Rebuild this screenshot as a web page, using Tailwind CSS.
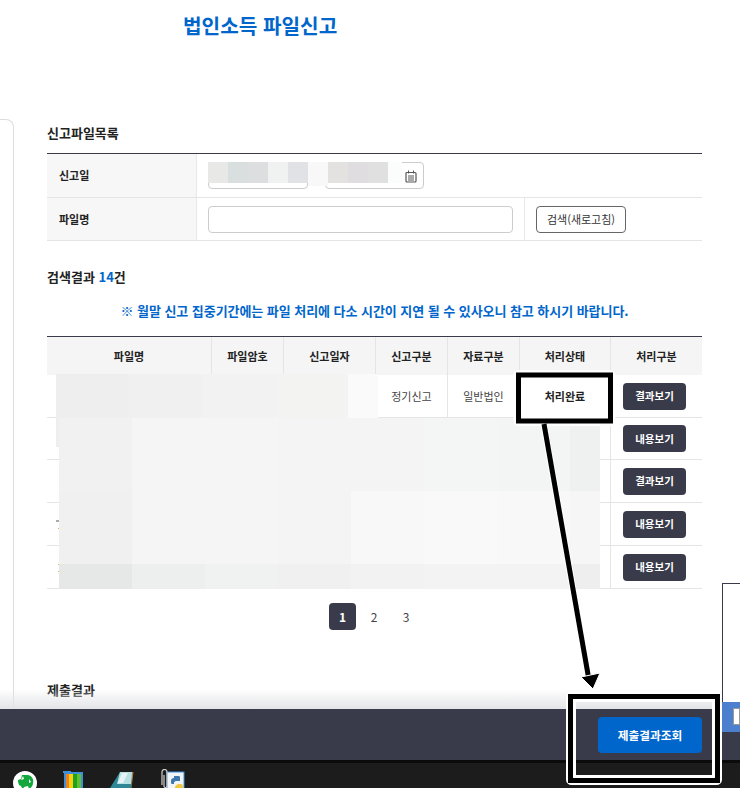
<!DOCTYPE html>
<html lang="ko">
<head>
    <meta charset="UTF-8" />
    <title>법인소득 파일신고</title>
    <script src="https://cdn.jsdelivr.net/npm/@tailwindcss/browser@4"></script>
</head>
<body class="bg-white font-['Noto_Sans_CJK_KR',sans-serif] text-[#222]">
<div class="relative w-[740px] h-[788px] overflow-hidden flex flex-col">

    <!-- 본문 -->
    <div class="relative h-[709px] overflow-hidden">
        <h1 class="h-[119px] pl-[183px] pt-[11px] text-[20.200px] leading-[30px] font-bold text-[#0066cc]">법인소득 파일신고</h1>

        <div class="flex h-[590px]">
            <div class="w-[14px] h-full border-t border-r border-[#dddddd] rounded-tr-lg"></div>

            <div class="ml-[33px] w-[655px] pt-[4px]">
                <h2 class="text-[13px] leading-[20px] font-bold">신고파일목록</h2>

                <div class="mt-[10px] border-t border-[#3a3b4a] text-[11px]">
                    <div class="flex h-[44px] border-b border-[#e5e5e5]">
                        <div class="w-[150px] bg-[#f7f7f7] border-r border-[#e8e8e8] pl-[12px] flex items-center font-bold">신고일</div>
                        <div class="relative flex-1 pl-[11px] pt-[8px]">
                            <div class="flex gap-[17px]">
                                <div class="w-[100px] h-[27px] border border-[#cccccc] rounded"></div>
                                <div class="relative w-[99px] h-[27px] border border-[#cccccc] rounded">
                                    <svg class="absolute right-[6px] top-[7px] w-[12px] h-[13px]" viewBox="0 0 12 13" fill="none" stroke="#555" stroke-width="1.2">
                                        <rect x="1" y="2.500" width="10" height="9.500" rx="1"/>
                                        <path d="M3.500 0.500v3M8.500 0.500v3M3 6h6M3 8h6M3 10h6" stroke-width="1"/>
                                    </svg>
                                </div>
                            </div>
                            <!-- 가림 처리 -->
                            <div class="absolute left-[11px] top-[8px] flex h-[21px]">
                                <div class="w-[20px] bg-[#e8e8e6]"></div>
                                <div class="w-[20px] bg-[#d9dedf]"></div>
                                <div class="w-[20px] bg-[#dcdedf]"></div>
                                <div class="w-[20px] bg-[#f0f1f1]"></div>
                                <div class="w-[20px] bg-[#e0e2e5]"></div>
                                <div class="w-[20px] h-[24px] bg-[#f8f8f8]"></div>
                                <div class="w-[20px] bg-[#e3e2e0]"></div>
                                <div class="w-[20px] bg-[#dfdddf]"></div>
                                <div class="w-[20px] bg-[#dfe0df]"></div>
                                <div class="w-[14px] bg-[#fbfcfc]"></div>
                            </div>
                        </div>
                    </div>
                    <div class="flex h-[43px] border-b border-[#e5e5e5]">
                        <div class="w-[150px] bg-[#f7f7f7] border-r border-[#e8e8e8] pl-[12px] flex items-center font-bold">파일명</div>
                        <div class="w-[328px] pl-[11px] border-r border-[#e8e8e8] flex items-center">
                            <input type="text" class="w-[305px] h-[27px] border border-[#cccccc] rounded" />
                        </div>
                        <div class="pl-[11px] flex items-center">
                            <button class="w-[90px] h-[27px] border border-[#666666] rounded text-[11px] text-[#333]">검색(새로고침)</button>
                        </div>
                    </div>
                </div>

                <h2 class="mt-[26px] text-[13px] leading-[20px] font-bold">검색결과 <span class="text-[#0066cc]">14</span>건</h2>
                <p class="mt-[14px] text-center text-[13px] leading-[20px] font-bold tracking-[-0.050px] text-[#0066cc]">※ 월말 신고 집중기간에는 파일 처리에 다소 시간이 지연 될 수 있사오니 참고 하시기 바랍니다.</p>

                <table class="mt-[15px] w-[655px] table-fixed border-separate border-spacing-0 border-t border-[#3a3b4a] text-[11px] text-center">
                    <colgroup>
                        <col class="w-[165px]" /><col class="w-[72px]" /><col class="w-[92px]" /><col class="w-[72px]" /><col class="w-[72px]" /><col class="w-[91px]" /><col class="w-[91px]" />
                    </colgroup>
                    <thead>
                        <tr class="h-[38px] bg-[#f5f5f5] font-bold">
                            <th class="border-r border-[#e5e5e5]">파일명</th>
                            <th class="border-r border-[#e5e5e5]">파일암호</th>
                            <th class="border-r border-[#e5e5e5]">신고일자</th>
                            <th class="border-r border-[#e5e5e5]">신고구분</th>
                            <th class="border-r border-[#e5e5e5]">자료구분</th>
                            <th class="border-r border-[#e5e5e5]">처리상태</th>
                            <th>처리구분</th>
                        </tr>
                    </thead>
                    <tbody class="text-[#444]">
                        <tr class="h-[43px]">
                            <td class="border-b border-r border-[#e5e5e5]"></td>
                            <td class="border-b border-r border-[#e5e5e5]"></td>
                            <td class="border-b border-r border-[#e5e5e5]"></td>
                            <td class="border-b border-r border-[#e5e5e5]">정기신고</td>
                            <td class="border-b border-r border-[#e5e5e5]">일반법인</td>
                            <td class="border-b border-r border-[#e5e5e5] font-bold text-[#222]">처리완료</td>
                            <td class="border-b border-[#e5e5e5] pr-[4px]"><button class="w-[63px] h-[27px] rounded bg-[#3a3b4a] text-white text-[10.500px] font-bold">결과보기</button></td>
                        </tr>
                        <tr class="h-[42px]">
                            <td class="border-b border-r border-[#e5e5e5]"></td><td class="border-b border-r border-[#e5e5e5]"></td><td class="border-b border-r border-[#e5e5e5]"></td><td class="border-b border-r border-[#e5e5e5]"></td><td class="border-b border-r border-[#e5e5e5]"></td><td class="border-b border-r border-[#e5e5e5]"></td>
                            <td class="border-b border-[#e5e5e5] pr-[4px]"><button class="w-[63px] h-[27px] rounded bg-[#3a3b4a] text-white text-[10.500px] font-bold">내용보기</button></td>
                        </tr>
                        <tr class="h-[43px]">
                            <td class="border-b border-r border-[#e5e5e5]"></td><td class="border-b border-r border-[#e5e5e5]"></td><td class="border-b border-r border-[#e5e5e5]"></td><td class="border-b border-r border-[#e5e5e5]"></td><td class="border-b border-r border-[#e5e5e5]"></td><td class="border-b border-r border-[#e5e5e5]"></td>
                            <td class="border-b border-[#e5e5e5] pr-[4px]"><button class="w-[63px] h-[27px] rounded bg-[#3a3b4a] text-white text-[10.500px] font-bold">결과보기</button></td>
                        </tr>
                        <tr class="h-[43px]">
                            <td class="border-b border-r border-[#e5e5e5]"></td><td class="border-b border-r border-[#e5e5e5]"></td><td class="border-b border-r border-[#e5e5e5]"></td><td class="border-b border-r border-[#e5e5e5]"></td><td class="border-b border-r border-[#e5e5e5]"></td><td class="border-b border-r border-[#e5e5e5]"></td>
                            <td class="border-b border-[#e5e5e5] pr-[4px]"><button class="w-[63px] h-[27px] rounded bg-[#3a3b4a] text-white text-[10.500px] font-bold">내용보기</button></td>
                        </tr>
                        <tr class="h-[43px]">
                            <td class="border-b border-r border-[#e5e5e5]"></td><td class="border-b border-r border-[#e5e5e5]"></td><td class="border-b border-r border-[#e5e5e5]"></td><td class="border-b border-r border-[#e5e5e5]"></td><td class="border-b border-r border-[#e5e5e5]"></td><td class="border-b border-r border-[#e5e5e5]"></td>
                            <td class="border-b border-[#e5e5e5] pr-[4px]"><button class="w-[63px] h-[27px] rounded bg-[#3a3b4a] text-white text-[10.500px] font-bold">내용보기</button></td>
                        </tr>
                    </tbody>
                </table>

                <div class="mt-[14px] pl-[2px] flex justify-center items-center text-[12px] text-[#444]">
                    <span class="w-[27px] h-[27px] rounded bg-[#3a3b4a] text-white font-bold flex items-center justify-center">1</span>
                    <span class="w-[32px] ml-[2px] text-center">2</span>
                    <span class="w-[32px] text-center">3</span>
                </div>

                <h2 class="mt-[50px] text-[13px] leading-[20px] font-bold">제출결과</h2>
            </div>
        </div>

        <!-- 첫 행 가림 -->
        <div class="absolute left-[56px] top-[374px] flex h-[44px]">
            <div class="w-[73px] bg-[#eeeeee]"></div>
            <div class="w-[73px] bg-[#f0f0f0]"></div>
            <div class="w-[73px] bg-[#f2f2f2]"></div>
            <div class="w-[73px] bg-[#f3f3f2]"></div>
            <div class="w-[30px] bg-[#f9faf9]"></div>
        </div>
        <!-- 나머지 행 가림 -->
        <div class="absolute left-[56px] top-[418px] w-[3px] h-[29px] bg-[#eeeeee]"></div>
        <div class="absolute left-[56px] top-[520px] w-[3px] h-[2px] bg-[#aaaaaa]"></div>
        <div class="absolute left-[58px] top-[528px] w-[1px] h-[1px] bg-[#f0b040]"></div>
        <div class="absolute left-[58px] top-[564px] w-[1px] h-[1px] bg-[#f0b040]"></div>
        <div class="absolute left-[58px] top-[571px] w-[1px] h-[1px] bg-[#f0b040]"></div>
        <div class="absolute left-[59px] top-[418px] grid grid-cols-[73px_73px_73px_73px_73px_73px_73px_30px] grid-rows-[73px_73px_25px]">
            <div class="bg-[#f1f1f1]"></div><div class="bg-[#f5f5f5]"></div><div class="bg-[#f5f5f5]"></div><div class="bg-[#f4f4f4]"></div><div class="bg-[#f4f4f4]"></div><div class="bg-[#f4f5f5]"></div><div class="bg-[#f3f4f4]"></div><div class="bg-[#eff1f1]"></div>
            <div class="bg-[#f0f0f0]"></div><div class="bg-[#f5f5f5]"></div><div class="bg-[#f5f5f5]"></div><div class="bg-[#f4f4f4]"></div><div class="bg-[#f8f8f8]"></div><div class="bg-[#f9f9f9]"></div><div class="bg-[#f8f8f8]"></div><div class="bg-[#f6f6f6]"></div>
            <div class="bg-[#e6e8e8]"></div><div class="bg-[#edeeee]"></div><div class="bg-[#f0f1f1]"></div><div class="bg-[#f0f0f0]"></div><div class="bg-[#f2f2f2]"></div><div class="bg-[#f3f3f3]"></div><div class="bg-[#f3f3f3]"></div><div class="bg-[#eeeeee]"></div>
        </div>

        <!-- 하단 그림자 -->
        <div class="absolute left-0 bottom-0 w-full h-[20px] bg-gradient-to-b from-white/0 to-[#e3e4e6]"></div>

        <!-- 오른쪽 창 일부 -->
        <div class="absolute left-[722px] top-[583px] w-[18px] h-[126px] border-l border-t border-[#3a3b4a] bg-white"></div>
    </div>

    <!-- 하단 바 -->
    <div class="relative h-[51px] bg-[#3a3b4a] flex justify-end items-center pr-[38px]">
        <button class="w-[104px] h-[36px] rounded-sm bg-[#0066cc] text-white text-[11.700px] font-bold">제출결과조회</button>
        <div class="absolute left-[722px] top-[-7px] w-[18px] h-[30px] bg-[#4d7fcf] pl-[11px] pt-[6px]">
            <div class="w-[7px] h-[17px] bg-white border border-[#999999]"></div>
        </div>
    </div>

    <!-- 작업 표시줄 -->
    <div class="h-[28px] border-t-[3px] border-[#0b0b0b] bg-[#1c1c1c] relative overflow-hidden">
        <svg class="absolute left-[13px] top-[8px] w-[24px] h-[24px]" viewBox="0 0 24 24">
            <circle cx="12" cy="12" r="12" fill="#fff"/>
            <path d="M5 9l3-1 1-4h6c4 1 6 4 5 8 0 3-2 5-4 6l-1-3-4 1-1 3-2-4c-2 0-3-3-3-6z" fill="#14a83c"/>
            <path d="M10 5l1 3-3 1zM16 8l2 3-2 1z" fill="#fff"/>
        </svg>
        <svg class="absolute left-[63px] top-[8px] w-[21px] h-[20px]" viewBox="0 0 21 20">
            <rect x="1" y="1" width="19" height="19" fill="#3f8fd8"/>
            <rect x="0" y="0" width="8" height="2" fill="#3f8fd8"/>
            <rect x="3" y="3" width="3" height="17" fill="#f08020"/>
            <rect x="6" y="3" width="4" height="17" fill="#f8d010"/>
            <rect x="10" y="3" width="4" height="17" fill="#20a020"/>
            <rect x="14" y="3" width="4" height="17" fill="#60c030"/>
        </svg>
        <svg class="absolute left-[110px] top-[9px] w-[24px] h-[17px]" viewBox="0 0 24 17">
            <path d="M10 0h13l-2 16H0z" fill="#2f8795"/>
            <path d="M10 0h13l-2 12H7z" fill="#b7e0e4"/>
            <path d="M12 1h6l-5 10H8z" fill="#e6f4f5"/>
            <path d="M22 0h1.500l-2 16H21z" fill="#a87c40"/>
        </svg>
        <svg class="absolute left-[160px] top-[6px] w-[25px] h-[20px]" viewBox="0 0 25 20" fill="none">
            <rect x="7" y="3" width="17" height="19" fill="#f2f5f8" stroke="#3f8fd8"/>
            <path d="M11 12c0-2 1-3 3-3v-2h5c1 0 1 1 1 2v3h-4c-1 0-2 1-2 2v1h-2c-1 0-1-1-1-3z" fill="#3f78ad"/>
            <path d="M15 18c1-2 2-3 4-3h2c1 0 2 1 2 3v2h-8z" fill="#f0c840"/>
            <path d="M2 16V3a2.500 2.500 0 0 1 5 0v14a1.500 1.500 0 0 1-3 0V6" stroke="#d0d0d0" stroke-width="1.200"/>
        </svg>
    </div>

    <!-- 주석 표시 -->
    <svg class="absolute left-0 top-0 w-[740px] h-[788px] pointer-events-none" viewBox="0 0 740 788" fill="none">
        <rect x="518" y="374.500" width="93" height="47" rx="1" stroke="#fff" stroke-width="9"/>
        <rect x="518.500" y="375" width="92" height="46" stroke="#000" stroke-width="5"/>
        <path d="M544 425 L589 680" stroke="#fff" stroke-width="7"/>
        <path d="M544 424 L589 680" stroke="#000" stroke-width="5"/>
        <path d="M581 677 L600 673 L593 689 Z" fill="#000" stroke="#fff" stroke-width="1"/>
        <rect x="570.500" y="696.500" width="147" height="84" rx="1" stroke="#fff" stroke-width="9"/>
        <rect x="570.500" y="696.500" width="147" height="84" stroke="#000" stroke-width="5"/>
        <path d="M574.500 700.500H713.500V776.500H574.500Z" stroke="#fff" stroke-width="3"/>
    </svg>
</div>
</body>
</html>
